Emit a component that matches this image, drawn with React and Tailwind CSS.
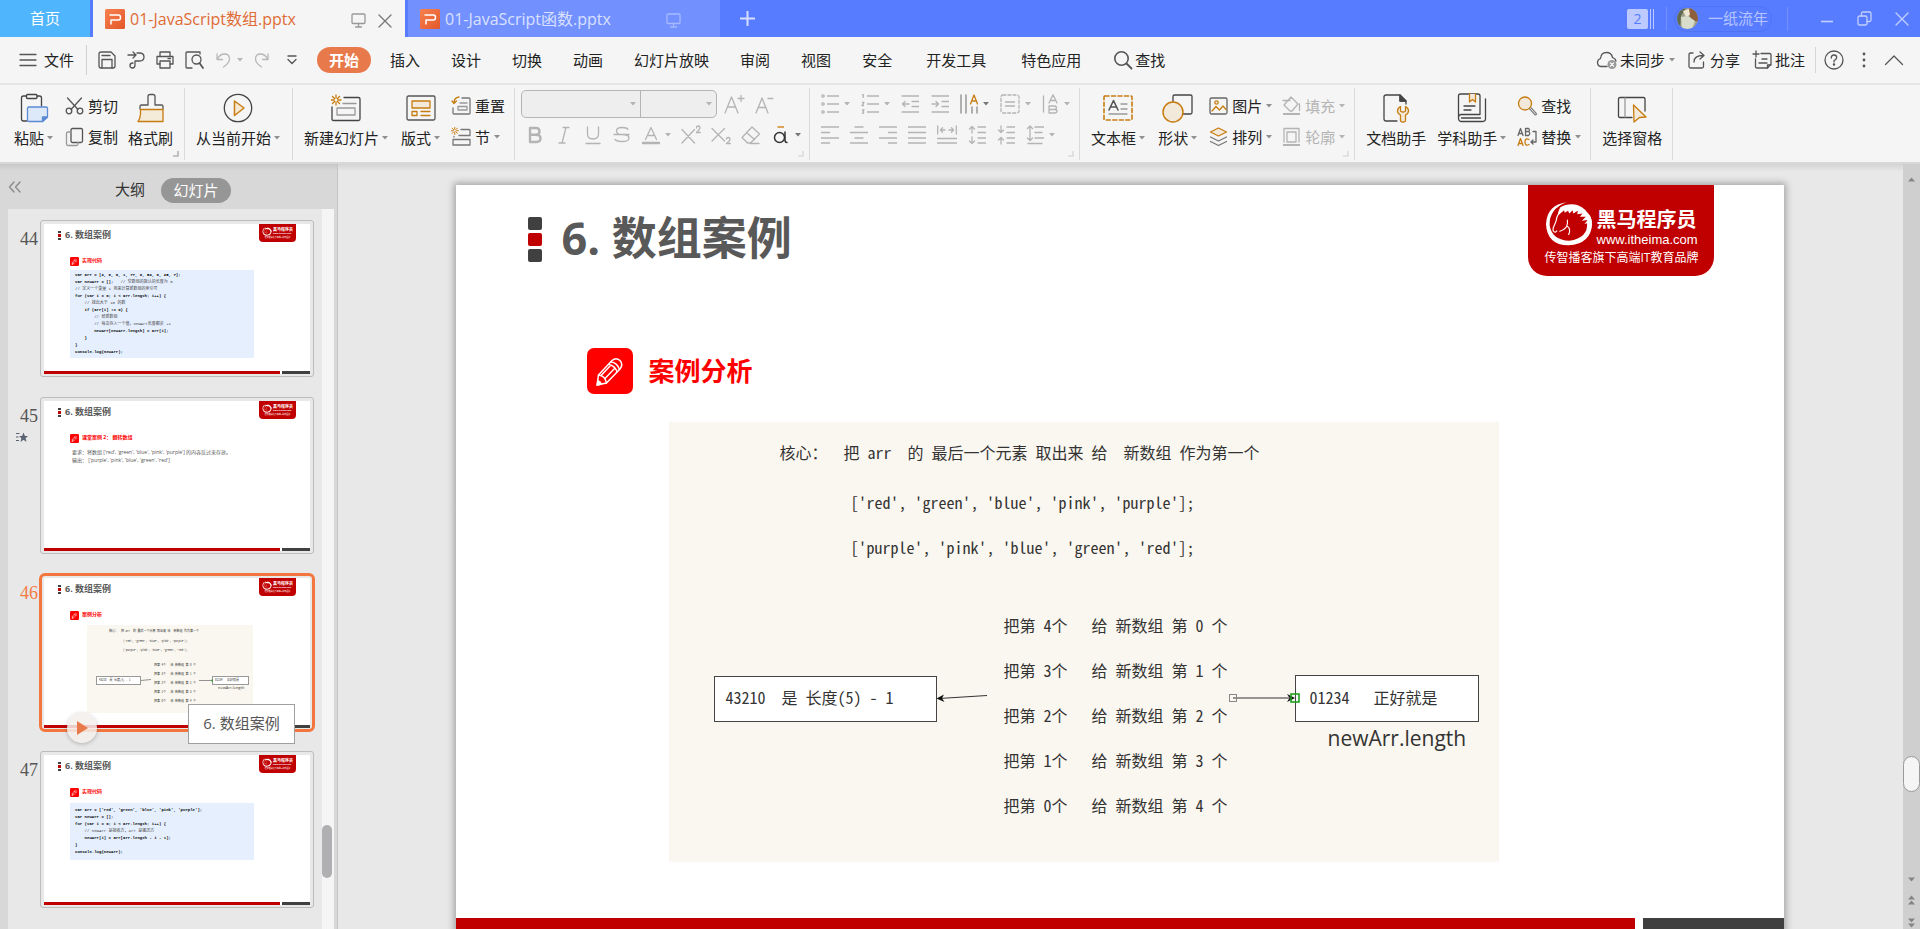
import React from "react";

const ORANGE = "#c77c11";
const CREAM = "#f2e9da";

function Ico({ w = 20, h = 20, vb, className = "", children }) {
  return (
    <svg
      width={w}
      height={h}
      viewBox={vb || `0 0 ${w} ${h}`}
      fill="none"
      stroke="currentColor"
      strokeWidth="1.3"
      strokeLinecap="round"
      strokeLinejoin="round"
      aria-hidden="true"
      className={`shrink-0 ${className}`}
    >
      {children}
    </svg>
  );
}

function Caret({ className = "text-[#8f8f8f]" }) {
  return (
    <svg width="6" height="4" viewBox="0 0 6 4" aria-hidden="true" className={`shrink-0 ${className}`}>
      <path d="M0 0H6L3 3.6Z" fill="currentColor" />
    </svg>
  );
}

function PptLogo() {
  return (
    <svg width="20" height="20" viewBox="0 0 20 20" aria-hidden="true" className="shrink-0">
      <defs>
        <linearGradient id="ppt" x1="0" y1="0" x2="1" y2="1">
          <stop offset="0" stopColor="#f8814f" />
          <stop offset="1" stopColor="#e2572a" />
        </linearGradient>
      </defs>
      <rect width="20" height="20" rx="1.5" fill="url(#ppt)" />
      <path d="M4.500 6H13.500Q15.500 6 15.500 8.500Q15.500 11 13.500 11H6V15.600" fill="none" stroke="#fff" strokeWidth="1.500" strokeLinejoin="round" />
    </svg>
  );
}

function Screen() {
  return (
    <Ico w={15} h={15}>
      <rect x="1" y="1" width="13" height="9.5" rx="1" />
      <path d="M7.5 10.5V14M4.5 14H10.5" />
    </Ico>
  );
}

function TitleBar() {
  return (
    <header className="flex h-[37px] shrink-0 bg-[#587cff]">
      <button className="h-full w-[90px] bg-[#4fb6fd] text-[15px] text-white">首页</button>
      <div className="ml-[3px] flex h-full w-[312px] items-center bg-[#f5f5f5] pr-[13px] pl-3 text-[#e06c35]">
        <PptLogo />
        <span className="ml-[5px] flex-1 text-[16px]">01-JavaScript数组.pptx</span>
        <span className="mt-1 mr-3 text-[#999]"><Screen /></span>
        <button aria-label="关闭标签" className="mt-1 text-[#777]">
          <Ico w={14} h={14}><path d="M1 1L13 13M13 1L1 13" /></Ico>
        </button>
      </div>
      <div className="ml-[3px] flex h-full w-[312px] items-center bg-[#7390ff] pl-3 text-[#d9e1ff]">
        <PptLogo />
        <span className="ml-[5px] flex-1 text-[16px]">01-JavaScript函数.pptx</span>
        <span className="mt-1 mr-[39px] text-[#a6b9ff]"><Screen /></span>
      </div>
      <button aria-label="新建标签" className="ml-5 text-[#d5deff]">
        <Ico w={15} h={15}><path d="M7.5 0V15M0 7.5H15" strokeWidth="2" strokeLinecap="butt" /></Ico>
      </button>
      <div className="ml-auto flex items-center pr-[11px]">
        <div className="flex items-center gap-[2px]">
          <span className="flex h-5 w-[21px] items-center justify-center rounded-[2px] bg-[#bccaff] text-[14px] text-[#587cff]">2</span>
          <span className="h-5 w-px bg-[#bccaff]" />
          <span className="h-5 w-px bg-[#bccaff]" />
        </div>
        <span className="ml-3 h-6 w-px bg-[#7390ff]" />
        <button className="ml-[7px] flex h-[26px] w-[98px] items-center rounded-full border border-[#4f73f3] pl-[2px] text-[15px] text-[#b6c5ff]">
          <svg width="21" height="21" viewBox="0 0 21 21" aria-hidden="true" className="shrink-0">
            <defs>
              <clipPath id="face"><circle cx="10.5" cy="10.5" r="10.5" /></clipPath>
            </defs>
            <g clipPath="url(#face)">
              <rect width="21" height="21" fill="#a3a28a" />
              <path d="M0 0H9L4 8L3 21H0Z" fill="#5f6a4f" />
              <path d="M12 0H21V14L15 12L11 6Z" fill="#8d5f3c" />
              <path d="M6 3L12 1L13 7L9 9Z" fill="#efe6d2" />
              <path d="M4 9L11 8L18 13L15 21H5Z" fill="#d8dccb" />
            </g>
          </svg>
          <span className="ml-[10px]">一纸流年</span>
        </button>
        <span className="ml-[15px] h-6 w-px bg-[#7390ff]" />
        <div className="ml-8 flex items-center gap-[23px] text-[#c3d0ff]">
          <button aria-label="最小化"><Ico w={14} h={15}><path d="M1 10.5H13" strokeWidth="1.6" strokeLinecap="butt" /></Ico></button>
          <button aria-label="还原">
            <Ico w={15} h={15}>
              <rect x="1" y="5" width="9" height="9" rx="1.5" />
              <path d="M4.5 5V2.5Q4.500 1 6 1H12.500Q14 1 14 2.500V9Q14 10.500 12.500 10.500H10" />
            </Ico>
          </button>
          <button aria-label="关闭"><Ico w={14} h={14}><path d="M1 1L13 13M13 1L1 13" /></Ico></button>
        </div>
      </div>
    </header>
  );
}

function MenuBar() {
  return (
    <nav className="flex h-12 shrink-0 items-center border-b-2 border-[#e5e5e5] bg-[#f5f5f5] text-[15px] text-[#222]">
      <button className="flex items-center pl-[19px]">
        <Ico w={18} h={14} className="text-[#555]"><path d="M1 1.500H17M1 7H17M1 12.500H17" /></Ico>
        <span className="ml-[7px]">文件</span>
      </button>
      <span className="ml-3 h-[30px] w-px bg-[#cfcfcf]" />
      <div className="ml-[10px] flex items-center gap-[9px] text-[#555]">
        <button aria-label="保存">
          <Ico>
            <path d="M2 4Q2 2 4 2H14L18 6V16Q18 18 16 18H4Q2 18 2 16Z" />
            <path d="M5 18V9.500H15V18M5 5.500H13" />
          </Ico>
        </button>
        <button aria-label="输出为PDF">
          <Ico>
            <path d="M2 5H9M7 2L10 5L7 8" />
            <path d="M11 3H13.500Q18 3 18 7Q18 11 13.500 11H9V15Q9 18 6.500 18Q4 18 4 15.500Q4 13 7 13" />
          </Ico>
        </button>
        <button aria-label="打印">
          <Ico>
            <path d="M5 6V2H15V6M5 14H2V6.500H18V14H15" />
            <path d="M5 11H15V18H5ZM13 8.500H15.500" />
          </Ico>
        </button>
        <button aria-label="打印预览">
          <Ico>
            <path d="M8 18H3Q2 18 2 17V3Q2 2 3 2H16V4" />
            <circle cx="12.500" cy="9.500" r="4.500" />
            <path d="M15.500 13L19 18" strokeWidth="1.800" />
          </Ico>
        </button>
      </div>
      <div className="ml-3 flex items-center text-[#b8b8b8]">
        <button aria-label="撤销" className="flex items-center gap-[6px]">
          <Ico w={15} h={16}><path d="M1 2V7.500H6.500M1.500 7Q4 2 8.500 2Q13.500 2 13.500 7Q13.500 11 7.500 15" /></Ico>
          <Caret className="text-[#b8b8b8]" />
        </button>
        <button aria-label="恢复" className="ml-[11px]">
          <Ico w={15} h={16}><path d="M14 2V7.500H8.500M13.500 7Q11 2 6.500 2Q1.500 2 1.500 7Q1.500 11 7.500 15" /></Ico>
        </button>
        <button aria-label="自定义快速访问工具栏" className="ml-[18px] text-[#555]">
          <Ico w={10} h={10}><path d="M1 1H9M1 4.500L5 8.500L9 4.500" /></Ico>
        </button>
      </div>
      <button className="ml-5 h-[26px] w-[54px] rounded-full bg-[#e8794a] font-bold text-white">开始</button>
      <div className="ml-[19px] flex gap-[31px]">
        {["插入", "设计", "切换", "动画", "幻灯片放映", "审阅", "视图", "安全"].map((t) => (
          <button key={t}>{t}</button>
        ))}
      </div>
      <div className="ml-[34px] flex gap-[35px]">
        <button>开发工具</button>
        <button>特色应用</button>
      </div>
      <button className="ml-8 flex items-center gap-[2px]">
        <Ico className="text-[#555]"><circle cx="8.500" cy="8.500" r="6.700" strokeWidth="1.600" /><path d="M13.500 13.500L18.500 18.500" strokeWidth="1.800" /></Ico>
        查找
      </button>
      <div className="ml-auto flex items-center pr-4">
        <button className="flex items-center">
          <Ico w={22} h={20} className="text-[#555]">
            <path d="M11 16.500H5Q1.500 16 1.500 12.500Q1.500 9.500 4.500 8.500Q5 2.500 10.500 2.500Q15.500 2.500 16.500 7.500Q19.500 8.500 20 11" />
            <circle cx="16" cy="14.500" r="4.500" fill="#999" stroke="none" />
            <path d="M14.400 12.900L17.600 16.100M17.600 12.900L14.400 16.100" stroke="#fff" />
          </Ico>
          <span className="mr-1 ml-[2px]">未同步</span>
          <Caret />
        </button>
        <button className="ml-3 flex items-center gap-1">
          <Ico w={19} h={20} className="text-[#555]">
            <path d="M6 3H3.500Q2 3 2 4.500V16.500Q2 18 3.500 18H15Q16.500 18 16.500 16.500V12" />
            <path d="M7 12Q7 5.500 16 5.500M13 2L17 5.500L13 9" />
          </Ico>
          分享
        </button>
        <button className="ml-3 flex items-center gap-[3px]">
          <Ico w={20} h={20} className="text-[#555]">
            <path d="M4 1V7M1 4H7M9 3.500H17.500Q19 3.500 19 5V14L15.500 18H5Q3.500 18 3.500 16.500V9" />
            <path d="M10 9H15M7 13H15M15.500 18V15H19" />
          </Ico>
          批注
        </button>
        <span className="ml-[10px] h-[26px] w-px bg-[#d5d5d5]" />
        <button aria-label="帮助" className="ml-2 text-[#555]">
          <Ico>
            <circle cx="10" cy="10" r="9" />
            <path d="M7.300 8Q7.300 5 10 5Q12.700 5 12.700 7.500Q12.700 9 10 10.800V12" />
            <circle cx="10" cy="14.600" r=".6" fill="currentColor" />
          </Ico>
        </button>
        <button aria-label="更多" className="ml-[18px] text-[#555]">
          <Ico w={4} h={16}>
            <g fill="currentColor" stroke="none"><circle cx="2" cy="2" r="1.400" /><circle cx="2" cy="8" r="1.400" /><circle cx="2" cy="14" r="1.400" /></g>
          </Ico>
        </button>
        <button aria-label="折叠功能区" className="ml-[18px] text-[#555]">
          <Ico w={20} h={12}><path d="M1.500 10.500L10 2L18.500 10.500" /></Ico>
        </button>
      </div>
    </nav>
  );
}

function Group({ className = "", corner, children }) {
  return (
    <div className={`relative flex h-[72px] items-start border-r border-[#dadada] ${className}`}>
      {children}
      {corner && (
        <svg width="6" height="6" viewBox="0 0 6 6" aria-hidden="true" className={`absolute right-[5px] bottom-[3px] ${corner}`}>
          <path d="M5 0V5H0" fill="none" stroke="currentColor" strokeWidth="1.600" />
        </svg>
      )}
    </div>
  );
}

function Big({ icon, label, caret }) {
  return (
    <button className="flex flex-col items-center gap-[5px] pt-[5px]">
      {icon}
      <span className="flex h-5 items-center gap-[3px]">
        {label}
        {caret && <Caret />}
      </span>
    </button>
  );
}

function Small({ icon, label, caret, dim }) {
  return (
    <button disabled={dim} className={`flex h-6 items-center gap-1 ${dim ? "text-[#b4b4b4]" : ""}`}>
      {icon}
      {label}
      {caret && <Caret className={dim ? "text-[#b4b4b4]" : "text-[#8f8f8f]"} />}
    </button>
  );
}

function Column({ children }) {
  return <div className="flex flex-col gap-[7px] pt-[6px]">{children}</div>;
}

function Tool({ name, w = 18, h = 20, caret, dark, children }) {
  return (
    <button aria-label={name} className={`flex items-center gap-[5px] ${dark ? "text-[#666]" : "text-[#b4b4b4]"}`}>
      <Ico w={w} h={h}>{children}</Ico>
      {caret && <Caret className={dark ? "text-[#777]" : "text-[#b4b4b4]"} />}
    </button>
  );
}

function Spark({ x = 0, y = 0, s = 1 }) {
  return (
    <g transform={`translate(${x} ${y}) scale(${s})`} stroke={ORANGE}>
      <path d="M5 0V3.200M5 6.800V10M0 5H3.200M6.800 5H10M1.500 1.500L3.500 3.500M6.500 6.500L8.500 8.500M8.500 1.500L6.500 3.500M3.500 6.500L1.500 8.500" />
    </g>
  );
}

function FontGroup() {
  return (
    <Group className="w-[295px] flex-col gap-[5px] pt-[2px] pl-[6px]" corner="text-[#dcdcdc]">
      <div className="flex h-7 items-center">
        <div className="flex h-7 w-[196px] rounded-[5px] border border-[#b4b4b4] bg-[#eeeeee]">
          <div className="flex w-[119px] items-center border-r border-[#b4b4b4] pr-[4px]">
            <select aria-label="字体" disabled className="h-full flex-1 appearance-none" />
            <Caret className="text-[#b4b4b4]" />
          </div>
          <div className="flex flex-1 items-center pr-1">
            <select aria-label="字号" disabled className="h-full flex-1 appearance-none" />
            <Caret className="text-[#b4b4b4]" />
          </div>
        </div>
        <div className="ml-[7px] flex gap-[9px]">
          <Tool name="增大字号" w={22}>
            <path d="M1 19L7.500 3L14 19M3.500 13H11.500M14 4.500H20M17 1.500V7.500" />
          </Tool>
          <Tool name="减小字号" w={20}>
            <path d="M1 19L7 4L13 19M3 13.500H11M13 4.500H18" />
          </Tool>
        </div>
      </div>
      <div className="ml-1 flex h-6 items-center gap-[10px]">
        <div className="flex gap-[9px]">
          <Tool name="加粗" w={20}><path d="M5 3H11Q14.500 3 14.500 6.500Q14.500 9.700 11 9.700H5M11 9.700Q15.500 9.700 15.500 13.300Q15.500 17 11.500 17H5V3" strokeWidth="2.400" /></Tool>
          <Tool name="倾斜" w={20}><path d="M9 2.500H15M5 18H11M12 2.500L8 18" /></Tool>
          <Tool name="下划线" w={20}><path d="M4.500 2V9Q4.500 14 10 14Q15.500 14 15.500 9V2M3 18.500H17" /></Tool>
          <Tool name="删除线" w={20}><path d="M16 4.500Q15 2.500 10 2.500Q4.500 2.500 4.500 6Q4.500 9.500 10 9.500Q17 9.500 17 13Q17 16.500 10 16.500Q5 16.500 3 14.500M2 9.500H17" /></Tool>
          <button aria-label="字体颜色" className="flex items-center gap-1 text-[#b4b4b4]">
            <Ico><path d="M4.500 14.500L10 2.500L15.500 14.500M6.500 10.500H13.500" /><path d="M2 18H18" strokeWidth="2.400" /></Ico>
            <Caret className="text-[#b4b4b4]" />
          </button>
        </div>
        <div className="flex gap-[10px]">
          <Tool name="上标" w={20}><path d="M1 4.500L13.500 18M13.500 4.500L1 18M15.500 3Q15.500 1 17.300 1Q19 1 19 2.800Q19 4 15.500 7.500H19.300" /></Tool>
          <Tool name="下标" w={20}><path d="M1 3.500L13.500 16M13.500 3.500L1 16M15.500 14Q15.500 12.500 17.300 12.500Q19 12.500 19 14.200Q19 15.500 15.500 18.500H19.300" /></Tool>
          <Tool name="清除格式" w={20}><path d="M11 2L18.500 9L9.500 18H6.500L1 12.500ZM5.500 7.500L13.500 14.500M9.500 18.500H18" /></Tool>
          <button aria-label="拼音指南" className="flex items-center gap-1 text-[#333]">
            <Ico>
              <path d="M6.500 2H13" stroke="#dda25a" strokeWidth="2" strokeLinecap="butt" />
              <circle cx="8.500" cy="12.500" r="5" strokeWidth="1.500" />
              <path d="M14 7V15Q14 17.500 16 17.500" strokeWidth="1.500" />
            </Ico>
            <Caret className="text-[#777]" />
          </button>
        </div>
      </div>
    </Group>
  );
}

function ParagraphGroup() {
  return (
    <Group className="w-[270px] flex-col gap-[7px] pt-1 pl-[11px]" corner="text-[#dcdcdc]">
      <div className="flex h-6 w-[249px] items-center justify-between">
        <Tool name="项目符号" caret>
          <path d="M6 2H18M6 10H18M6 18H18" strokeLinecap="butt" />
          <circle cx="2" cy="2" r="1.200" /><circle cx="2" cy="10" r="1.200" /><circle cx="2" cy="18" r="1.200" />
        </Tool>
        <Tool name="编号" caret>
          <path d="M6 2H18M6 10H18M6 18H18M1 1L2.200 .5V4M1 8.500H3L1 11.500H3M1 16H3L2 17.500Q3.500 19.500 1 19.500" strokeLinecap="butt" />
        </Tool>
        <Tool name="减少缩进"><path d="M1 2H18M11 7.500H18M11 12.500H18M1 18H18M1.500 10H8M4 7.500L1.500 10L4 12.500" /></Tool>
        <Tool name="增加缩进"><path d="M1 2H18M11 7.500H18M11 12.500H18M1 18H18M1 10H7.500M5 7.500L7.500 10L5 12.500" /></Tool>
        <Tool name="文字方向" caret dark>
          <path d="M1 1V19M6 1V19M12 13V19M17 13V19" stroke="#8a8a8a" />
          <path d="M10.500 10L14 1L17.500 10M11.500 7H16.500" stroke={ORANGE} />
        </Tool>
        <Tool name="对齐文本" w={20} caret>
          <rect x="1" y="1" width="18" height="18" rx="2" strokeDasharray="3 2" />
          <path d="M5.500 8H14.500M5.500 12H14.500" />
        </Tool>
        <Tool name="转智能图形" w={17} caret>
          <path d="M1.500 2V18M7 9L11 .8L15 9M8.500 6.500H13.500M7 12V19H12.500Q15 19 15 17Q15 15.500 12.500 15.500H7M7 12H12Q14.500 12 14.500 13.800Q14.500 15.500 12 15.500" />
        </Tool>
      </div>
      <div className="flex h-6 items-center gap-[11px]">
        <Tool name="左对齐"><path d="M0 2H18M0 7.500H9M0 13H18M0 18H9" strokeLinecap="butt" /></Tool>
        <Tool name="居中"><path d="M4.500 2H13.500M0 7.500H18M4.500 13H13.500M0 18H18" strokeLinecap="butt" /></Tool>
        <Tool name="右对齐"><path d="M0 2H18M9 7.500H18M0 13H18M9 18H18" strokeLinecap="butt" /></Tool>
        <Tool name="两端对齐"><path d="M0 2H18M0 7.500H18M0 13H18M0 18H18" strokeLinecap="butt" /></Tool>
        <Tool name="分散对齐" w={20}><path d="M.7 1V9M19.300 1V9M3.500 5H8M5.500 2.800L3.500 5L5.500 7.200M12 5H16.500M14.500 2.800L16.500 5L14.500 7.200M0 13.500H20M0 18H20" /></Tool>
        <Tool name="增大段落间距"><path d="M4 8V1.500M1.500 4L4 1.500L6.500 4M4 12V18.500M1.500 16L4 18.500L6.500 16M10 2H18M10 7.500H18M10 13H18M10 18H18" /></Tool>
        <Tool name="减小段落间距"><path d="M4 1V7.500M1.500 5L4 7.500L6.500 5M4 19V12.500M1.500 15L4 12.500L6.500 15M10 2H18M10 7.500H18M10 13H18M10 18H18" /></Tool>
        <Tool name="行距" caret><path d="M4 1V15.500M1.500 3.500L4 1L6.500 3.500M1.500 13L4 15.500L6.500 13M9 2H18M9 7.500H16M9 13H18M2 18.500H16" /></Tool>
      </div>
    </Group>
  );
}

function Ribbon() {
  return (
    <div className="flex h-[79px] shrink-0 items-center border-b-2 border-[#d8d8d8] bg-[#f5f5f5] text-[15px] leading-5 text-[#222]">
      <Group className="pr-[11px] pl-[14px]" corner="text-[#b4b4b4]">
        <Big
          label="粘贴"
          caret
          icon={
            <Ico w={30} h={30} className="text-[#444]">
              <path d="M8 28H4.500Q2.500 28 2.500 26V5Q2.500 3 4.500 3H7M18 3H20.500Q22.500 3 22.500 5V13" />
              <rect x="7.500" y="1.500" width="10.500" height="4" rx="1" />
              <path d="M10 14H27Q28.500 14 28.500 15.500V24L23.500 28.500H10Q8.500 28.500 8.500 27V15.500Q8.500 14 10 14Z" fill="#dde8f8" stroke="#5b8bd4" />
              <path d="M23.500 28.500V24H28.500Z" fill="#5b8bd4" stroke="#5b8bd4" />
            </Ico>
          }
        />
        <div className="ml-3">
          <Column>
            <Small
              label="剪切"
              icon={
                <Ico w={19} h={18} className="text-[#555]">
                  <path d="M2.500 1L13 12.500M16.500 1L6 12.500" />
                  <circle cx="4" cy="14" r="2.800" /><circle cx="15" cy="14" r="2.800" />
                </Ico>
              }
            />
            <Small
              label="复制"
              icon={
                <Ico w={19} h={20} className="text-[#555]">
                  <rect x="6" y="1.500" width="11.500" height="14" rx="1.500" />
                  <path d="M6 5H3Q1.500 5 1.500 6.500V17Q1.500 18.500 3 18.500H11.500Q13 18.500 13 17V15.500" stroke="#999" />
                </Ico>
              }
            />
          </Column>
        </div>
        <div className="ml-[10px]">
          <Big
            label="格式刷"
            icon={
              <Ico w={28} h={30} className="text-[#555]">
                <path d="M3 16V13.500Q3 12 4.500 12H11V3.500Q11 1.500 13 1.500H16Q18 1.500 18 3.500V12H24.500Q26 12 26 13.500V16" />
                <path d="M3.500 16.500H26V28.500H1Q3.500 25 3.500 21Z" fill="#f5ebd9" stroke={ORANGE} />
              </Ico>
            }
          />
        </div>
      </Group>

      <Group className="pr-3 pl-[11px]">
        <Big
          label="从当前开始"
          caret
          icon={
            <Ico w={30} h={30} className="text-[#444]">
              <circle cx="15" cy="15" r="13.700" />
              <path d="M11.500 8L21 15L11.500 22.500Z" fill="#f7ead5" stroke={ORANGE} strokeWidth="1.500" />
            </Ico>
          }
        />
      </Group>

      <Group className="pr-[9px] pl-[11px]">
        <Big
          label="新建幻灯片"
          caret
          icon={
            <Ico w={30} h={30} className="text-[#444]">
              <path d="M13 4.500H27.500Q29 4.500 29 6V26Q29 27.500 27.500 27.500H2.500Q1 27.500 1 26V14" />
              <path d="M12 10.500H25" stroke="#999" />
              <rect x="6" y="15" width="18" height="7" stroke="#999" />
              <Spark x={0} y={2} />
            </Ico>
          }
        />
        <div className="ml-[13px]">
          <Big
            label="版式"
            caret
            icon={
              <Ico w={30} h={30} className="text-[#555]">
                <rect x="1" y="3" width="28" height="24" rx="1.500" />
                <rect x="6" y="8" width="18" height="7" fill={CREAM} stroke={ORANGE} />
                <rect x="6" y="18.500" width="5" height="4" stroke={ORANGE} />
                <path d="M15 18.500H24M15 22.500H24" stroke={ORANGE} />
              </Ico>
            }
          />
        </div>
        <div className="ml-[11px]">
          <Column>
            <Small
              label="重置"
              icon={
                <Ico className="text-[#777]">
                  <path d="M11 2H18Q19 2 19 3V17Q19 18 18 18H3Q2 18 2 17V12" />
                  <path d="M9 7H16M7 10.500H16V14H7Z" stroke="#999" />
                  <path d="M8 1Q3 1.500 3 7M1 5L3 7.500L5.500 5" stroke={ORANGE} />
                </Ico>
              }
            />
            <Small
              label="节"
              caret
              icon={
                <Ico className="text-[#777]">
                  <path d="M10 2.500H18Q19 2.500 19 3.500V8.500H8M2 12.500H19V18H2ZM3 9.500V10" />
                  <Spark x={0} y={0} s={0.75} />
                </Ico>
              }
            />
          </Column>
        </div>
      </Group>

      <FontGroup />
      <ParagraphGroup />

      <Group className="pr-[9px] pl-[11px]" corner="text-[#dcdcdc]">
        <Big
          label="文本框"
          caret
          icon={
            <Ico w={30} h={30} className="text-[#555]">
              <rect x="1" y="3" width="28" height="24" rx="1" stroke={ORANGE} strokeDasharray="4 2.500" strokeWidth="1.600" />
              <path d="M6 17L10.500 7.500L15 17M7.500 14H13.500" strokeWidth="1.600" />
              <path d="M18 11H24M18 16H24M6 21H24" stroke="#999" />
            </Ico>
          }
        />
        <div className="ml-[13px]">
          <Big
            label="形状"
            caret
            icon={
              <Ico w={31} h={30} className="text-[#444]">
                <rect x="11" y="2" width="19" height="19" rx="1.500" />
                <circle cx="11" cy="19" r="10" fill={CREAM} stroke={ORANGE} strokeWidth="1.500" />
              </Ico>
            }
          />
        </div>
        <div className="ml-3">
          <Column>
            <Small
              label="图片"
              caret
              icon={
                <Ico w={19} h={20} className="text-[#666]">
                  <rect x="1" y="2" width="17" height="16" rx="1.500" />
                  <circle cx="7.500" cy="6.500" r="1.700" stroke={ORANGE} />
                  <path d="M3 15L7 10.500L10.500 14L14 10L17 13.500" stroke={ORANGE} />
                </Ico>
              }
            />
            <Small
              label="排列"
              caret
              icon={
                <Ico w={19} h={20} className="text-[#777]">
                  <path d="M1.500 10L9.500 14L17.500 10M1.500 14.500L9.500 18.500L17.500 14.500" />
                  <path d="M9.500 1L17.500 5L9.500 9L1.500 5Z" fill={CREAM} stroke={ORANGE} />
                </Ico>
              }
            />
          </Column>
        </div>
        <div className="ml-[10px]">
          <Column>
            <Small
              dim
              label="填充"
              caret
              icon={
                <Ico w={19} h={20}>
                  <path d="M1 4.500H8M9 1L16 8L10 15H8L2 9ZM17.500 8V14.500" />
                  <path d="M1 18H18" strokeWidth="2" strokeLinecap="butt" />
                </Ico>
              }
            />
            <Small
              dim
              label="轮廓"
              caret
              icon={
                <Ico w={19} h={20}>
                  <path d="M2 15V1.500H17V15M5 15V5H14V15H5" />
                  <path d="M1 18H18" strokeWidth="2" strokeLinecap="butt" />
                </Ico>
              }
            />
          </Column>
        </div>
      </Group>

      <Group className="pr-[9px] pl-[11px]">
        <Big
          label="文档助手"
          icon={
            <Ico w={28} h={30} className="text-[#444]">
              <path d="M15 28H4Q2 28 2 26V4Q2 2 4 2H18L24 8V11M18 2V8H24Z" />
              <path d="M18 2L24 8H18Z" fill="#444" />
              <path d="M18.500 13.500Q15.500 15 15.500 18Q15.500 20.500 18.500 22V27.500Q18.500 29 21 29Q23.500 29 23.500 27.500V22Q26.500 20.500 26.500 18Q26.500 15 23.500 13.500V17.500Q23.500 19 21 19Q18.500 19 18.500 17.500Z" fill={CREAM} stroke={ORANGE} />
            </Ico>
          }
        />
        <div className="ml-[11px]">
          <Big
            label="学科助手"
            caret
            icon={
              <Ico w={30} h={30} className="text-[#444]">
                <path d="M1.500 25V3Q1.500 1 3.500 1H21Q23 1 23 3V21.500H4.500Q1.500 21.500 1.500 25Q1.500 28.500 4.500 28.500H25Q28.500 28.500 28.500 26V6" />
                <path d="M4.500 25H23.500M7 13H18M7 17H14" />
                <path d="M12.500 1V9L15.500 6.500L18.500 9V1" stroke={ORANGE} fill={CREAM} />
              </Ico>
            }
          />
        </div>
        <div className="ml-[11px]">
          <Column>
            <Small
              label="查找"
              icon={
                <Ico className="text-[#777]">
                  <path d="M13.500 12.500L18.500 18" strokeWidth="3" />
                  <path d="M13.500 12.500L18.500 18" stroke="#eee" strokeWidth="1" />
                  <circle cx="8" cy="7.500" r="6.500" fill={CREAM} stroke={ORANGE} />
                </Ico>
              }
            />
            <Small
              label="替换"
              caret
              icon={
                <Ico className="text-[#666]">
                  <path d="M1 8.500L3.500 1.500L6 8.500M1.800 6.500H5.200M8.500 1.500H11.500Q13.500 3 11.500 4.500Q14 6.500 11.500 8.500H8.500ZM8.500 4.500H11.500" />
                  <path d="M1 18.500L3.500 11.500L6 18.500M1.800 16.500H5.200M12 12.500Q8 10.500 8 15Q8 19.500 12 17.500" stroke={ORANGE} />
                  <path d="M16 4.500H19V15H14.500M16 13L14 15L16 17" />
                </Ico>
              }
            />
          </Column>
        </div>
      </Group>

      <Group className="pr-[10px] pl-[11px]">
        <Big
          label="选择窗格"
          icon={
            <Ico w={30} h={30} className="text-[#444]">
              <path d="M15 24.500H3Q1.500 24.500 1.500 23V6Q1.500 4.500 3 4.500H26.500Q28 4.500 28 6V18" />
              <path d="M8 5V24" stroke="#999" />
              <path d="M16.500 12L29 24L22.500 24.500L17 29Z" fill={CREAM} stroke={ORANGE} />
            </Ico>
          }
        />
      </Group>
    </div>
  );
}

function Pencil({ className }) {
  return (
    <svg viewBox="0 0 46 46" aria-hidden="true" className={`shrink-0 ${className}`}>
      <rect width="46" height="46" rx="7" fill="#fe0000" />
      <g fill="none" stroke="#fff" strokeWidth="1.500" strokeLinejoin="round" strokeLinecap="round">
        <path d="M10 37L11.500 27L25 12.500Q29 9 33 12.500Q36.500 16.500 33 21L19.500 35Z" />
        <path d="M24 14Q30 14.500 32.500 21.500M21.500 16.500Q28 17.500 30 24M11.500 27Q18 27.500 19.500 35M14.500 27L24 17M18 30.500L28 20" />
        <path d="M10 37L10.800 32.500Q14 33 14.500 36Z" fill="#fff" strokeWidth="1" />
      </g>
    </svg>
  );
}

function Horse({ className }) {
  return (
    <svg viewBox="0 0 150 140" aria-hidden="true" className={`shrink-0 ${className}`}>
      <g fill="#fff">
        <path d="M68 4Q8 12 5 70Q8 134 73 135Q142 131 145 70Q145 50 134 38L130 66Q134 112 76 121Q24 120 16 74Q14 24 68 4Z" />
        <path d="M48 20Q70 6 100 12Q130 22 143 56L144 84L136 66L122 70L132 58L114 60L126 48L108 48L116 38L100 40L102 30L88 38L86 28L76 38L72 30L62 36L60 28L44 42Q38 40 48 20Z" />
      </g>
      <path
        d="M50 32Q38 42 36 60L27 82Q24 94 34 95L38 91M47 92Q62 88 68 77Q72 68 70 58M69 76Q82 84 74 102"
        fill="none"
        stroke="#fff"
        strokeWidth="3.500"
        strokeLinecap="round"
        strokeLinejoin="round"
      />
    </svg>
  );
}

function ThumbFrame({ heading, children }) {
  return (
    <div className="flex h-[150px] w-[266px] shrink-0 flex-col overflow-hidden bg-white text-left">
      <div className="flex h-[33px] items-start justify-between pr-[14px] pl-[14px]">
        <div className="flex h-[22px] items-center gap-1 pt-[1px] text-[9px] font-bold text-[#595959]">
          <span className="flex flex-col gap-px">
            <span className="h-[2px] w-[3px] bg-[#404040]" />
            <span className="h-[3px] w-[3px] bg-[#c00000]" />
            <span className="h-[2px] w-[3px] bg-[#404040]" />
          </span>
          6. 数组案例
        </div>
        <div className="flex h-[18px] w-[37px] flex-col items-center rounded-b-[4px] bg-[#c00000] pt-[3px] text-white">
          <div className="flex items-center gap-px">
            <Horse className="h-[9px] w-[10px]" />
            <span className="flex flex-col text-[4px] leading-[5px] font-bold">
              <span>黑马程序员</span>
              <span className="text-[2px] leading-[3px]">www.itheima.com</span>
            </span>
          </div>
          <span className="text-[2px] leading-[4px]">传智播客旗下高端IT教育品牌</span>
        </div>
      </div>
      <div className="flex h-[9px] items-center gap-[3px] pl-[26px] text-[5px] font-bold text-[#fe0000]">
        <Pencil className="h-[9px] w-[9px]" />
        {heading}
      </div>
      <div className="flex-1">{children}</div>
      <div className="flex h-[3px] gap-[2px]">
        <span className="flex-1 bg-[#c00000]" />
        <span className="w-7 bg-[#404040]" />
      </div>
    </div>
  );
}

function Code({ lines, className }) {
  return (
    <pre className={`ml-[26px] w-[184px] bg-[#e6effe] pl-[5px] font-['Liberation_Mono','Noto_Sans_CJK_SC',monospace] text-[4px] leading-[7px] text-black ${className}`}>
      {lines.map((line, i) => {
        const at = line.indexOf("//");
        return (
          <div key={i}>
            <b>{at < 0 ? line : line.slice(0, at)}</b>
            {at >= 0 && <span className="text-[#444]">{line.slice(at)}</span>}
          </div>
        );
      })}
    </pre>
  );
}

const CODE_44 = [
  "var arr = [2, 0, 6, 1, 77, 0, 52, 0, 25, 7];",
  "var newArr = [];   // 空数组的默认的长度为 0",
  "// 定义一个变量 i 用来计算新数组的索引号",
  "for (var i = 0; i < arr.length; i++) {",
  "    // 找出大于 10 的数",
  "    if (arr[i] != 0) {",
  "        // 给新数组",
  "        // 每次存入一个值，newArr长度都会 +1",
  "        newArr[newArr.length] = arr[i];",
  "    }",
  "}",
  "console.log(newArr);",
];

const CODE_47 = [
  "var arr = ['red', 'green', 'blue', 'pink', 'purple'];",
  "var newArr = [];",
  "for (var i = 0; i < arr.length; i++) {",
  "    // newArr 是接收方，arr 是输送方",
  "    newArr[i] = arr[arr.length - i - 1];",
  "}",
  "console.log(newArr);",
];

const STEPS = [[4, 0], [3, 1], [2, 2], [1, 3], [0, 4]];
const CORE = "核心：  把 arr  的 最后一个元素 取出来 给  新数组 作为第一个";
const ARR_A = "['red', 'green', 'blue', 'pink', 'purple'];";
const ARR_B = "['purple', 'pink', 'blue', 'green', 'red'];";

function MiniDiagram() {
  return (
    <div className="relative mt-[5px] ml-[43px] h-[88px] w-[166px] bg-[#faf7f0] font-['Noto_Sans_Mono_CJK_SC','Noto_Sans_CJK_SC',monospace] text-[3px] leading-[4px] whitespace-pre text-[#333]">
      <div className="absolute top-[4px] left-[22px]">{CORE}</div>
      <div className="absolute top-[14px] left-[36px]">{ARR_A}</div>
      <div className="absolute top-[23px] left-[36px]">{ARR_B}</div>
      <div className="absolute top-[38px] left-[67px] flex flex-col gap-[5px]">
        {STEPS.map(([a, b]) => (
          <div key={a}>{`把第 ${a}个   给 新数组 第 ${b} 个`}</div>
        ))}
      </div>
      <div className="absolute top-[51px] left-[9px] h-[9px] w-[45px] border border-[#999] bg-white pl-[2px] leading-[7px]">43210  是 长度(5) - 1</div>
      <div className="absolute top-[51px] left-[125px] h-[9px] w-[37px] border border-[#999] bg-white pl-[2px] leading-[7px]">01234   正好就是</div>
      <svg width="166" height="88" viewBox="0 0 166 88" aria-hidden="true" className="absolute inset-0">
        <path d="M54 55.500L64 54.500M112 55.500H125" stroke="#777" strokeWidth=".8" />
        <rect x="124.500" y="54.500" width="1.500" height="2" fill="#2a9d2a" />
      </svg>
      <div className="absolute top-[61px] left-[131px] font-['Open_Sans',sans-serif] text-[4px]">newArr.length</div>
    </div>
  );
}

function Thumb({ no, active, star, children }) {
  return (
    <li className="flex h-[157px]">
      <div className="flex w-8 shrink-0 flex-col pt-[9px] pl-3 font-['Liberation_Serif',serif] text-[18px] leading-5">
        <span className={active ? "text-[#f47b43]" : "text-[#555]"}>{no}</span>
        {star && (
          <svg width="12" height="11" viewBox="0 0 12 11" aria-hidden="true" className="mt-[6px] -ml-1 text-[#5b6472]">
            <path d="M7.500 .5L8.900 4H12L9.600 6.200L10.500 10L7.500 7.800L4.500 10L5.400 6.200L3 4H6.100Z" fill="currentColor" />
            <path d="M0 1.500H3.500M0 5H2.500M0 8.500H3" stroke="currentColor" />
          </svg>
        )}
      </div>
      <button
        aria-label={`幻灯片 ${no}`}
        className={`flex h-[157px] w-[274px] items-center justify-center ${
          active ? "rounded-[5px] outline-[3px] -outline-offset-2 outline-[#f4763f]" : "rounded-[3px] border border-[#bcbcbc]"
        }`}
      >
        {children}
      </button>
    </li>
  );
}

function Sidebar() {
  return (
    <aside className="flex w-[338px] shrink-0 flex-col border-r border-[#c4c4c4] bg-[#d8d8d8]">
      <div className="flex h-[45px] shrink-0 items-center bg-linear-to-b from-[#c8c8c8] to-[#d8d8d8] to-15% text-[15px]">
        <button aria-label="收起窗格" className="ml-2 text-[#888]">
          <Ico w={14} h={12}><path d="M6 1L1.500 6L6 11M12 1L7.500 6L12 11" /></Ico>
        </button>
        <button className="ml-[93px] pt-[5px] text-[#333]">大纲</button>
        <button className="mt-[7px] ml-4 h-[25px] w-[70px] rounded-full bg-[#969696] text-white">幻灯片</button>
      </div>
      <div className="flex min-h-0 flex-1 pr-[3px] pl-2">
        <div className="relative min-w-0 flex-1 overflow-hidden bg-[#e8e8e8] pt-[11px]">
          <ul className="flex flex-col gap-5">
            <Thumb no={44}>
              <ThumbFrame heading="实现代码">
                <Code lines={CODE_44} className="mt-1 pt-[2px] pb-[2px]" />
              </ThumbFrame>
            </Thumb>
            <Thumb no={45} star>
              <ThumbFrame heading="课堂案例 2： 翻转数组">
                <div className="mt-[5px] ml-7 text-[5px] leading-[8px] text-[#555]">
                  <p>要求：将数组 ['red', 'green', 'blue', 'pink', 'purple'] 的内容反过来存放。</p>
                  <p>输出： ['purple', 'pink', 'blue', 'green', 'red']</p>
                </div>
              </ThumbFrame>
            </Thumb>
            <Thumb no={46} active>
              <ThumbFrame heading="案例分析">
                <MiniDiagram />
              </ThumbFrame>
            </Thumb>
            <Thumb no={47}>
              <ThumbFrame heading="实现代码">
                <Code lines={CODE_47} className="mt-[6px] pt-1 pb-1" />
              </ThumbFrame>
            </Thumb>
          </ul>
          <button aria-label="从当前页播放" className="absolute top-[504px] left-[59px] flex h-[30px] w-[30px] items-center justify-center rounded-full bg-[#f3efeb]/85 shadow-[0_1px_4px_rgba(0,0,0,0.25)]">
            <svg width="12" height="14" viewBox="0 0 12 14" aria-hidden="true"><path d="M1 0L12 7L1 14Z" fill="#e8794a" /></svg>
          </button>
          <div role="tooltip" className="absolute top-[495px] left-[180px] flex h-10 w-[107px] items-center justify-center border border-[#a0a0a0] bg-white pb-[2px] text-[15px] text-[#555]">
            6. 数组案例
          </div>
        </div>
        <div className="flex w-3 flex-col bg-[#f5f5f5]">
          <span className="grow-[616]" />
          <span className="h-[53px] w-[10px] rounded-full bg-[#b0b0b3]" />
          <span className="grow-[51]" />
        </div>
      </div>
    </aside>
  );
}

function Diagram() {
  return (
    <div className="relative h-[440px] w-[830px] bg-[#faf7f0] font-['Noto_Sans_Mono_CJK_SC','Noto_Sans_CJK_SC',monospace] text-[16px] leading-6 whitespace-pre text-[#333]">
      <p className="absolute top-[18px] left-[111px]">{CORE}</p>
      <p className="absolute top-[68px] left-[182px]">{ARR_A}</p>
      <p className="absolute top-[113px] left-[182px]">{ARR_B}</p>
      <div className="absolute top-[191px] left-[335px] flex flex-col gap-[21px]">
        {STEPS.map(([a, b]) => (
          <p key={a}>{`把第 ${a}个   给 新数组 第 ${b} 个`}</p>
        ))}
      </div>
      <div className="absolute top-[254px] left-[45px] flex h-[46px] w-[223px] items-center border border-[#444] bg-white pb-1 pl-[11px]">43210  是 长度(5) - 1</div>
      <div className="absolute top-[253px] left-[626px] flex h-[47px] w-[184px] items-center border border-[#444] bg-white pb-1 pl-[14px]">01234   正好就是</div>
      <svg width="830" height="440" viewBox="0 0 830 440" aria-hidden="true" className="absolute inset-0">
        <path d="M270 276.500L318 273.500M564 276H620" stroke="#333" strokeWidth="1.200" />
        <path d="M267.500 276.500L275 272.500L273 276.300L275.500 280Z" fill="#111" />
        <path d="M626 276L618 272L620.500 276L618 280Z" fill="#111" />
        <rect x="560.500" y="272.500" width="7" height="7" fill="none" stroke="#888" />
        <rect x="622" y="272" width="8" height="8" fill="none" stroke="#1fa01f" strokeWidth="1.600" />
      </svg>
      <p className="absolute top-[304px] left-[659px] font-['Open_Sans',sans-serif] text-[21px]">newArr.length</p>
    </div>
  );
}

function Slide() {
  return (
    <article className="relative flex h-[747px] w-[1328px] shrink-0 flex-col bg-white shadow-[0_0_7px_2px_rgba(0,0,0,0.3)]">
      <div className="flex h-[108px] shrink-0 items-center gap-5 pl-[72px]">
        <span className="flex flex-col gap-[3px]">
          <span className="h-[13px] w-[14px] rounded-[2px] bg-[#404040]" />
          <span className="h-[13px] w-[14px] rounded-[2px] bg-[#c00000]" />
          <span className="h-[13px] w-[14px] rounded-[2px] bg-[#404040]" />
        </span>
        <h1 className="pb-[2px] text-[45px] leading-[52px] font-bold text-[#595959]">6. 数组案例</h1>
      </div>
      <div className="absolute top-0 right-[70px] flex h-[91px] w-[186px] flex-col rounded-b-[19px] bg-[#c00000] pt-4 pl-4 text-white">
        <div className="flex h-[46px] items-center gap-[3px]">
          <Horse className="h-[46px] w-[50px]" />
          <div className="flex flex-col pt-[6px]">
            <span className="text-[20px] leading-[24px] font-bold">黑马程序员</span>
            <span className="font-['Liberation_Sans',sans-serif] text-[13px] leading-[15px]">www.itheima.com</span>
          </div>
        </div>
        <span className="mt-[2px] pl-px text-[12px] leading-[18px] whitespace-nowrap">传智播客旗下高端IT教育品牌</span>
      </div>
      <div className="mt-[55px] flex items-center gap-4 pl-[131px]">
        <Pencil className="h-[46px] w-[46px]" />
        <h2 className="text-[26px] leading-[30px] font-bold text-[#fe0000]">案例分析</h2>
      </div>
      <div className="mt-7 pl-[213px]">
        <Diagram />
      </div>
      <div className="mt-auto flex h-[14px] gap-2">
        <span className="flex-1 bg-[#c00000]" />
        <span className="w-[141px] bg-[#404040]" />
      </div>
    </article>
  );
}

function Arrow({ up }) {
  return (
    <svg width="7" height="5" viewBox="0 0 7 5" aria-hidden="true">
      <path d={up ? "M0 4.500H7L3.500 .5Z" : "M0 .5H7L3.500 4.500Z"} fill="#858585" />
    </svg>
  );
}

function VerticalBar() {
  return (
    <div className="flex w-[17px] shrink-0 flex-col items-center bg-[#cfcfcf] pt-[13px] pb-px">
      <button aria-label="向上滚动"><Arrow up /></button>
      <span className="grow-[573]" />
      <span className="h-9 w-[17px] rounded-full border border-[#9a9a9a] bg-[#f5f5f5]" />
      <span className="grow-[85]" />
      <button aria-label="向下滚动"><Arrow /></button>
      <button aria-label="上一张幻灯片" className="mt-[13px] flex flex-col"><Arrow up /><Arrow up /></button>
      <button aria-label="下一张幻灯片" className="mt-[13px] flex flex-col"><Arrow /><Arrow /></button>
    </div>
  );
}

export default function App() {
  return (
    <div className="flex h-screen flex-col overflow-hidden bg-[#e8e8e8] font-['Open_Sans','Noto_Sans_CJK_SC',sans-serif]">
      <TitleBar />
      <MenuBar />
      <Ribbon />
      <div className="flex min-h-0 flex-1">
        <Sidebar />
        <main className="flex min-w-0 flex-1 justify-center overflow-hidden bg-linear-to-b from-[#d4d4d4] to-[#e8e8e8] to-1% pt-[21px] pr-[2px]">
          <Slide />
        </main>
        <VerticalBar />
      </div>
    </div>
  );
}
